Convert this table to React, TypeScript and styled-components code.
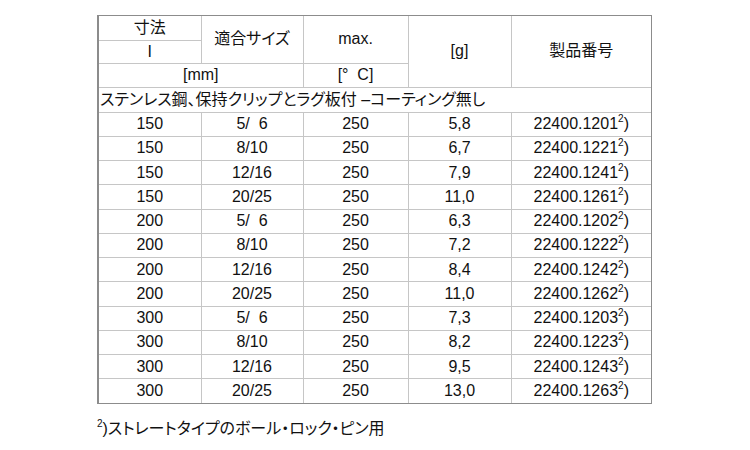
import React from "react";
import styled, { createGlobalStyle } from "styled-components";

const GlobalStyle = createGlobalStyle`
  html, body {
    margin: 0;
    padding: 0;
    background: #ffffff;
  }
  body {
    font-family: "Liberation Sans", "Noto Sans CJK JP", Arial, sans-serif;
    color: #111111;
  }
`;

const Page = styled.div`
  padding: 15px 0 0 97px;
`;

const Frame = styled.div`
  width: 555px;
  box-sizing: border-box;
  border: 1px solid #8c8c8c;
  border-left-width: 2px;
`;

const Table = styled.table`
  width: 100%;
  border-collapse: collapse;
  border-style: hidden;
  table-layout: fixed;
  font-size: 16px;
`;

const Row = styled.tr<{ $h: number }>`
  height: ${(p) => p.$h}px;
`;

const Cell = styled.td`
  border: 1px solid #c6c6c6;
  padding: 0;
  text-align: center;
  vertical-align: middle;
  line-height: 1;
  white-space: nowrap;
`;

const HeadCell = styled(Cell)`
  font-size: 16px;
  font-feature-settings: "palt";
`;

const SectionCell = styled(Cell)`
  text-align: left;
  font-size: 16px;
  font-feature-settings: "palt";
  padding-left: 1px;
`;

const Sup = styled.sup`
  font-size: 10px;
  vertical-align: 7px;
  line-height: 0;
`;

const Note = styled.div`
  margin-top: 11px;
  font-size: 16px;
  font-feature-settings: "palt";
`;

type Item = { l: number; fit: string; max: number; g: string; no: string };

const fits = ["5/\u00a0\u00a06", "8/10", "12/16", "20/25"];
const lens = [150, 200, 300];
const weights = [
  ["5,8", "6,7", "7,9", "11,0"],
  ["6,3", "7,2", "8,4", "11,0"],
  ["7,3", "8,2", "9,5", "13,0"],
];

const items: Item[] = lens.flatMap((l, i) =>
  fits.map((fit, j) => ({
    l,
    fit,
    max: 250,
    g: weights[i][j],
    no: `22400.12${j * 2}${i + 1}`,
  }))
);

const App = () => {
  return (
    <>
      <GlobalStyle />
      <Page>
        <Frame>
          <Table>
            <colgroup>
              <col style={{ width: 102 }} />
              <col style={{ width: 102 }} />
              <col style={{ width: 105 }} />
              <col style={{ width: 103 }} />
              <col />
            </colgroup>
            <tbody>
              <Row $h={24}>
                <HeadCell>寸法</HeadCell>
                <HeadCell rowSpan={2}>適合サイズ</HeadCell>
                <HeadCell rowSpan={2}>max.</HeadCell>
                <HeadCell rowSpan={3}>[g]</HeadCell>
                <HeadCell rowSpan={3}>製品番号</HeadCell>
              </Row>
              <Row $h={23}>
                <HeadCell>I</HeadCell>
              </Row>
              <Row $h={24}>
                <HeadCell colSpan={2}>[mm]</HeadCell>
                <HeadCell>[°&nbsp;&nbsp;C]</HeadCell>
              </Row>
              <Row $h={25}>
                <SectionCell colSpan={5}>
                  ステンレス鋼、保持クリップとラグ板付 –コーティング無し
                </SectionCell>
              </Row>
              {items.map((it) => (
                <Row $h={24.25} key={it.no}>
                  <Cell>{it.l}</Cell>
                  <Cell>{it.fit}</Cell>
                  <Cell>{it.max}</Cell>
                  <Cell>{it.g}</Cell>
                  <Cell>
                    {it.no}
                    <Sup>2</Sup>)
                  </Cell>
                </Row>
              ))}
            </tbody>
          </Table>
        </Frame>
        <Note>
          <Sup>2</Sup>)ストレートタイプのボール・ロック・ピン用
        </Note>
      </Page>
    </>
  );
};

export default App;
